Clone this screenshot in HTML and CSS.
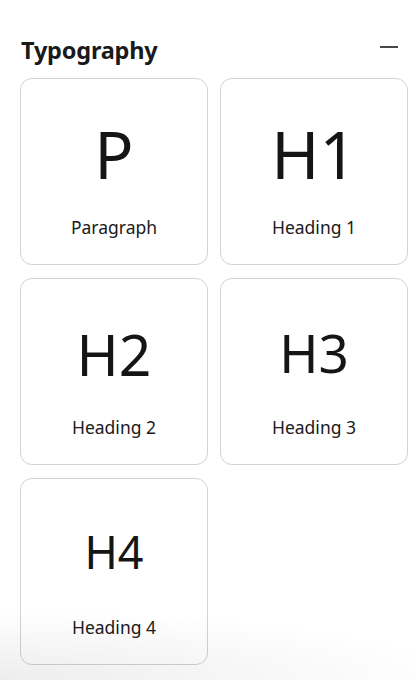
FILE: index.html
```html
<!DOCTYPE html>
<html lang="en">
<head>
    <meta charset="UTF-8">
    <meta name="viewport" content="width=device-width, initial-scale=1.0">
    <title>Typography</title>
    <link rel="stylesheet" href="styles.css">
</head>
<body>

<!-- 排版面板 -->
<section class="panel">
    <div class="panel-header">
        <h2>Typography</h2>
        <button class="collapse-btn" aria-label="Collapse">
            <svg width="20" height="20" viewBox="0 0 20 20"><path d="M1 10h18" stroke="#1a1a1a" stroke-width="1.6"/></svg>
        </button>
    </div>
    <div class="block-grid">
        <div class="block">
            <span class="block-icon icon-p">P</span>
            <span class="block-label">Paragraph</span>
        </div>
        <div class="block">
            <span class="block-icon icon-h1">H1</span>
            <span class="block-label">Heading 1</span>
        </div>
        <div class="block">
            <span class="block-icon icon-h2">H2</span>
            <span class="block-label">Heading 2</span>
        </div>
        <div class="block">
            <span class="block-icon icon-h3">H3</span>
            <span class="block-label">Heading 3</span>
        </div>
        <div class="block">
            <span class="block-icon icon-h4">H4</span>
            <span class="block-label">Heading 4</span>
        </div>
    </div>
</section>

<!-- 底部渐隐 -->
<div class="bottom-fade"></div>

</body>
</html>
```

FILE: styles.css
```css
/* 全局样式 */
body {
    margin: 0;
    font-family: 'Noto Sans', 'Open Sans', sans-serif;
    background: #ffffff;
    color: #1a1a1a;
}

/* 面板 */
.panel {
    padding: 34px 17px 0 20px;
}
.panel-header {
    display: flex;
    justify-content: space-between;
    align-items: center;
    height: 32px;
    margin-bottom: 12px;
}
.panel-header h2 {
    margin: 0;
    font-size: 23.5px;
    font-weight: 700;
    letter-spacing: -0.2px;
    padding-left: 1px;
}
.collapse-btn {
    background: transparent;
    border: none;
    padding: 0;
    width: 20px;
    height: 20px;
    margin-top: -6px;
    cursor: pointer;
}

/* 区块网格 */
.block-grid {
    display: grid;
    grid-template-columns: 188px 188px;
    gap: 13px 12px;
}
.block {
    height: 187px;
    box-sizing: border-box;
    border: 1px solid #d2d2d2;
    border-radius: 12px;
    display: flex;
    flex-direction: column;
    align-items: center;
}
.block-icon {
    height: 130px;
    display: flex;
    align-items: center;
    justify-content: center;
    line-height: 1;
    color: #151515;
    padding-top: 20px;
    box-sizing: border-box;
}
.icon-p, .icon-h1 { font-size: 65px; }
.icon-h2 { font-size: 57px; }
.icon-h3 { font-size: 53px; padding-top: 16px; }
.icon-h4 { font-size: 45px; padding-top: 14px; }

.block-label {
    font-size: 17.5px;
    line-height: 24px;
    margin-top: 6px;
}

/* 底部渐隐 */
.bottom-fade {
    position: fixed;
    left: 0;
    right: 0;
    bottom: 0;
    height: 70px;
    background: radial-gradient(ellipse 110% 100% at 0% 100%, rgba(0, 0, 0, 0.07), rgba(0, 0, 0, 0) 100%);
    pointer-events: none;
}
```
